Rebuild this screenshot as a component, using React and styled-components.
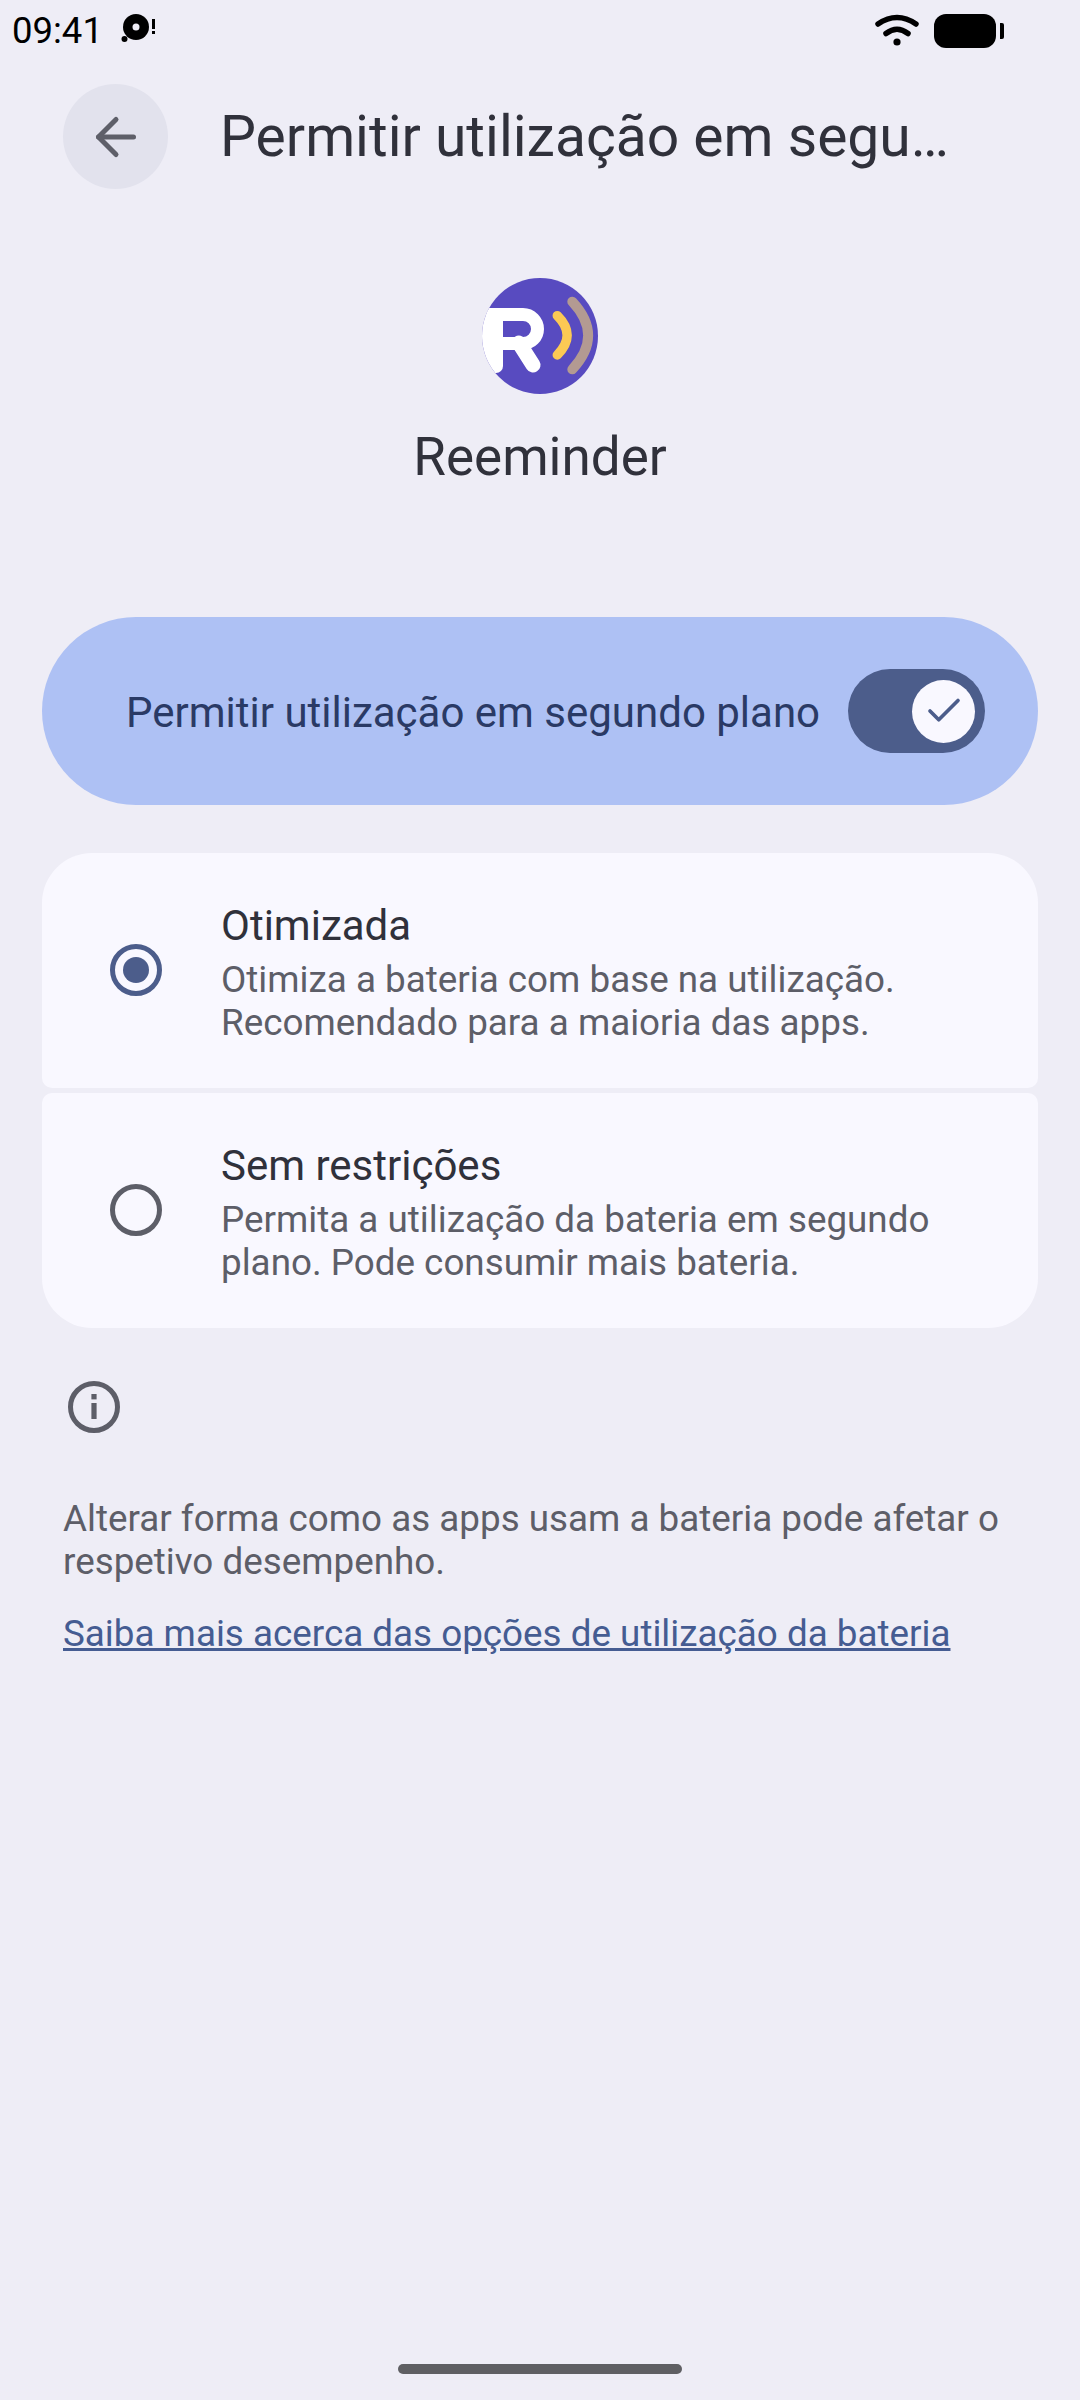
import React from 'react';
import styled, {createGlobalStyle} from 'styled-components';
import {ArrowLeft, Check} from 'lucide-react';

const GlobalStyle = createGlobalStyle`
  html, body {
    margin: 0;
    padding: 0;
    background: #EEEDF6;
    font-family: Roboto, "Noto Sans", sans-serif;
  }
  * {
    box-sizing: border-box;
  }
`;

const OPTIONS = [
  {
    title: 'Otimizada',
    lines: ['Otimiza a bateria com base na utilização.', 'Recomendado para a maioria das apps.'],
    selected: true,
  },
  {
    title: 'Sem restrições',
    lines: ['Permita a utilização da bateria em segundo', 'plano. Pode consumir mais bateria.'],
    selected: false,
  },
];

const App = () => {
  return (
    <PageContainer>
      <GlobalStyle />
      <StatusBar>
        <StatusLeft>
          <Clock>09:41</Clock>
          <svg width="36" height="36" viewBox="0 0 36 36">
            <circle cx="15" cy="14" r="13" fill="#000" />
            <circle cx="15" cy="14" r="3.5" fill="#EEEDF6" />
            <circle cx="3.5" cy="26" r="3" fill="#000" />
            <rect x="31" y="6" width="3" height="10" fill="#000" />
            <rect x="31" y="18" width="3" height="3" fill="#000" />
          </svg>
        </StatusLeft>
        <StatusRight>
          <svg width="44" height="34" viewBox="0 0 44 34" fill="none" stroke="#000" strokeLinecap="round">
            <path d="M3 10 Q22 -3 41 10" strokeWidth="5.5" />
            <path d="M11 19.5 Q22 11 33 19.5" strokeWidth="5.5" />
            <circle cx="22" cy="28" r="3.6" fill="#000" stroke="none" />
          </svg>
          <Battery />
          <BatteryNub />
        </StatusRight>
      </StatusBar>

      <Toolbar>
        <BackButton>
          <ArrowLeft size={60} strokeWidth={2} color="#5E5F69" />
        </BackButton>
        <Title>Permitir utilização em segu…</Title>
      </Toolbar>

      <AppHeader>
        <svg width="116" height="116" viewBox="0 0 116 116">
          <defs>
            <clipPath id="logoClip">
              <circle cx="58" cy="58" r="58" />
            </clipPath>
          </defs>
          <circle cx="58" cy="58" r="58" fill="#584BC0" />
          <g clipPath="url(#logoClip)" fill="none" strokeLinecap="round" strokeLinejoin="round">
            <rect x="-10" y="30" width="31" height="65" rx="7" fill="#fff" />
            <path d="M11 36.5 H41 A14.5 14.5 0 0 1 41 65.5 H11" stroke="#fff" strokeWidth="13" />
            <path d="M37 65 L51 87" stroke="#fff" strokeWidth="15" />
            <path d="M75.3 37.7 Q95 57.3 75.3 77" stroke="#FCC954" strokeWidth="9.5" />
            <path d="M90.3 23.7 Q122 57.5 90.3 91.3" stroke="#B39A92" strokeWidth="10" />
          </g>
        </svg>
        <AppName>Reeminder</AppName>
      </AppHeader>

      <MainSwitch>
        <SwitchLabel>Permitir utilização em segundo plano</SwitchLabel>
        <SwitchTrack>
          <SwitchThumb>
            <Check size={42} strokeWidth={2.1} color="#4C5D8B" />
          </SwitchThumb>
        </SwitchTrack>
      </MainSwitch>

      <OptionList>
        {OPTIONS.map((option, i) => (
          <OptionCard key={option.title} $first={i === 0}>
            <RadioSlot>
              <Radio $selected={option.selected} />
            </RadioSlot>
            <OptionText>
              <OptionTitle>{option.title}</OptionTitle>
              {option.lines.map((line) => (
                <OptionLine key={line}>{line}</OptionLine>
              ))}
            </OptionText>
          </OptionCard>
        ))}
      </OptionList>

      <Footer>
        <InfoIcon>
          <svg width="54" height="54" viewBox="0 0 54 54">
            <circle cx="27" cy="27" r="23.5" fill="none" stroke="#5D5E68" strokeWidth="5" />
            <rect x="24.4" y="14" width="5.2" height="5.4" fill="#5D5E68" />
            <rect x="24.4" y="23" width="5.2" height="16" fill="#5D5E68" />
          </svg>
        </InfoIcon>
        <FooterText>
          Alterar forma como as apps usam a bateria pode afetar o
          <br />
          respetivo desempenho.
        </FooterText>
        <LearnMore>Saiba mais acerca das opções de utilização da bateria</LearnMore>
      </Footer>

      <HomeIndicator />
    </PageContainer>
  );
};

const PageContainer = styled.div`
  display: flex;
  flex-direction: column;
  position: relative;
  width: 1080px;
  height: 2400px;
  overflow: hidden;
  background: #EEEDF6;
`;

const StatusBar = styled.div`
  display: flex;
  justify-content: space-between;
  align-items: center;
  height: 60px;
  padding: 1px 76px 0 12px;
`;

const StatusLeft = styled.div`
  display: flex;
  align-items: center;
  gap: 18px;
`;

const Clock = styled.div`
  font-size: 36.5px;
  line-height: 60px;
  color: #000;
`;

const StatusRight = styled.div`
  display: flex;
  align-items: center;
`;

const Battery = styled.div`
  width: 62px;
  height: 34px;
  margin-left: 15px;
  border-radius: 12px;
  background: #000;
`;

const BatteryNub = styled.div`
  width: 4px;
  height: 16px;
  margin-left: 4px;
  border-radius: 0 2px 2px 0;
  background: #000;
`;

const Toolbar = styled.div`
  display: flex;
  align-items: center;
  margin-top: 24px;
  padding-left: 63px;
`;

const BackButton = styled.div`
  display: flex;
  justify-content: center;
  align-items: center;
  flex: none;
  width: 105px;
  height: 105px;
  border-radius: 50%;
  background: #E2E2ED;
`;

const Title = styled.div`
  margin-left: 52px;
  font-size: 57px;
  color: #30313B;
  white-space: nowrap;
`;

const AppHeader = styled.div`
  display: flex;
  flex-direction: column;
  align-items: center;
  margin-top: 89px;
`;

const AppName = styled.div`
  margin-top: 31px;
  font-size: 53px;
  line-height: 65px;
  color: #30313B;
`;

const MainSwitch = styled.div`
  display: flex;
  align-items: center;
  justify-content: space-between;
  height: 188px;
  margin: 127px 42px 0;
  padding: 0 53px 0 84px;
  border-radius: 94px;
  background: #AEC1F4;
`;

const SwitchLabel = styled.div`
  padding-top: 2px;
  font-size: 42px;
  color: #2A3A65;
  white-space: nowrap;
`;

const SwitchTrack = styled.div`
  display: flex;
  justify-content: flex-end;
  align-items: center;
  width: 137px;
  height: 84px;
  padding-right: 10px;
  border-radius: 42px;
  background: #4C5D8B;
`;

const SwitchThumb = styled.div`
  display: flex;
  justify-content: center;
  align-items: center;
  width: 63px;
  height: 63px;
  border-radius: 50%;
  background: #F9F8FF;
`;

const OptionList = styled.div`
  display: flex;
  flex-direction: column;
  gap: 5px;
  margin: 48px 42px 0;
`;

const OptionCard = styled.div`
  display: flex;
  align-items: center;
  height: 235px;
  border-radius: ${(p) => (p.$first ? '50px 50px 10px 10px' : '10px 10px 50px 50px')};
  background: #F9F8FF;
`;

const RadioSlot = styled.div`
  display: flex;
  justify-content: center;
  width: 179px;
  flex: none;
  padding: 0 0 2px 9px;
`;

const Radio = styled.div`
  position: relative;
  width: 52px;
  height: 52px;
  border-radius: 50%;
  border: 5px solid ${(p) => (p.$selected ? '#4C5D8B' : '#5D5E68')};

  &::after {
    content: '';
    display: ${(p) => (p.$selected ? 'block' : 'none')};
    position: absolute;
    top: 8px;
    left: 8px;
    width: 26px;
    height: 26px;
    border-radius: 50%;
    background: #4C5D8B;
  }
`;

const OptionText = styled.div`
  display: flex;
  flex-direction: column;
  padding-top: 3px;
`;

const OptionTitle = styled.div`
  margin-bottom: 7px;
  font-size: 42px;
  line-height: 50px;
  color: #30313B;
`;

const OptionLine = styled.div`
  font-size: 36.8px;
  line-height: 43px;
  color: #5D5E68;
  white-space: nowrap;
`;

const Footer = styled.div`
  display: flex;
  flex-direction: column;
  padding: 52px 42px 0 63px;
`;

const InfoIcon = styled.div`
  display: flex;
  width: 62px;
  height: 54px;
  padding-left: 4px;
`;

const FooterText = styled.div`
  margin-top: 63px;
  font-size: 36.8px;
  line-height: 43px;
  color: #5D5E68;
  white-space: nowrap;
`;

const LearnMore = styled.a`
  margin-top: 29px;
  font-size: 36.8px;
  line-height: 43px;
  color: #455C92;
  text-decoration: underline;
  white-space: nowrap;
`;

const HomeIndicator = styled.div`
  position: absolute;
  left: 398px;
  bottom: 26px;
  width: 284px;
  height: 10px;
  border-radius: 5px;
  background: #5F5F63;
`;

export default App;
